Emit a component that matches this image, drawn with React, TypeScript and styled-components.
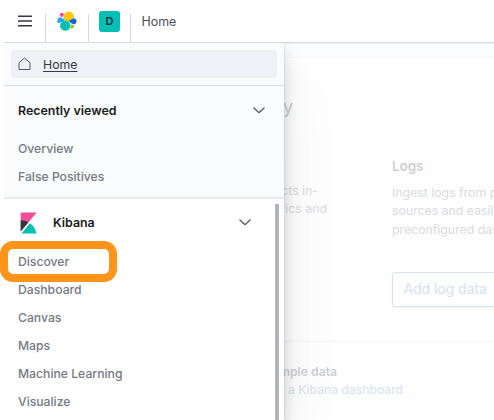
import React from "react";
import styled, { createGlobalStyle } from "styled-components";

const GlobalStyle = createGlobalStyle`
  * { box-sizing: border-box; }
  body { margin: 0; background: #fff; font-family: Inter, "Open Sans", sans-serif; }
`;

const Page = styled.div`
  position: relative;
  width: 494px;
  height: 420px;
  overflow: hidden;
  background: #fff;
  display: flex;
  flex-direction: column;
`;

const Header = styled.header`
  height: 43px;
  flex: none;
  margin-left: 4px;
  border-bottom: 1px solid #d3dae6;
  display: flex;
  align-items: stretch;
`;

const HeaderCell = styled.div<{ $width: number }>`
  width: ${(p) => p.$width}px;
  display: flex;
  align-items: center;
  justify-content: center;
  margin-top: 14px;
  border-right: 1px solid #d3dae6;
  svg, span { margin-top: -14px; }
`;

const SpaceBadge = styled.span`
  width: 21px;
  height: 21px;
  border-radius: 3px;
  background: #00bfb3;
  color: #10333a;
  font-size: 11px;
  font-weight: 600;
  line-height: 21px;
  text-align: center;
`;

const Breadcrumb = styled.div`
  padding: 1px 0 0 10.5px;
  font-size: 12.4px;
  line-height: 41px;
  color: #4b4e57;
`;

const Body = styled.div`
  flex: 1;
  position: relative;
  display: flex;
  padding-left: 4px;
`;

const Main = styled.main`
  flex: 1;
  min-width: 0;
  padding-left: 280px;
  border-top: 1px solid #eceff4;
  background: #fefefe;
  overflow: hidden;
`;

const MainTop = styled.div`
  height: 14px;
  background: #fcfdfe;
  border-bottom: 1px solid #f8f9fa;
`;

const Columns = styled.div`
  display: flex;
  height: 284px;
  border-bottom: 1px solid #f4f5f7;
`;

const Column = styled.section<{ $width?: number }>`
  width: ${(p) => p.$width ?? 102}px;
  flex: none;
  display: flex;
  flex-direction: column;
  white-space: nowrap;
`;

const ClippedLine = styled.div<{ $width: number }>`
  width: ${(p) => p.$width}px;
  display: flex;
  justify-content: flex-end;
  white-space: nowrap;
`;

const Solution = styled(ClippedLine)`
  margin-top: 35px;
  height: 28px;
  font-size: 18px;
  line-height: 28px;
  color: #c9cacd;
`;

const Copy = styled.div`
  font-size: 12.3px;
  line-height: 18.4px;
  color: #dadbde;
`;

const LeftCopy = styled(Copy)`
  margin-top: 61px;
`;

const CardTitle = styled.h3`
  margin: 98px 0 8px;
  font-size: 13.4px;
  font-weight: 600;
  line-height: 20px;
  color: #cecfd2;
`;

const AddButton = styled.button`
  margin-top: 33px;
  width: 130px;
  height: 35px;
  padding: 0 0 1px 10.5px;
  border: 1px solid #d3e3f1;
  border-radius: 3px;
  background: #fefefe;
  box-shadow: 0 1px 2px rgba(150, 180, 210, 0.1);
  color: #d4e3f1;
  font: 13.9px Inter, sans-serif;
  text-align: left;
`;

const Sample = styled.section`
  padding-top: 21px;
  font-size: 12.2px;
  line-height: 18.4px;
`;

const SampleTitle = styled(ClippedLine)`
  font-weight: 600;
  color: #cecfd2;
`;

const SampleLink = styled(ClippedLine)`
  color: #d4e3f1;
`;

const Nav = styled.nav`
  position: absolute;
  left: 4px;
  top: 0;
  bottom: 0;
  width: 280px;
  background: #fff;
  box-shadow: 0 40px 64px rgba(65, 78, 101, 0.05), 0 12px 24px rgba(30, 35, 45, 0.13),
    0 6px 12px rgba(30, 35, 45, 0.08), 0 1px 2px rgba(30, 35, 45, 0.2);
  clip-path: inset(0 -80px 0 0);
`;

const NavTop = styled.div`
  height: 43px;
  padding: 7px;
  background: #fafbfd;
  border-bottom: 1px solid #d9dfe9;
`;

const HomeLink = styled.a`
  height: 28px;
  border-radius: 3px;
  background: #eef2f7;
  display: flex;
  align-items: center;
  padding-left: 7px;
  gap: 12px;
  font-size: 12.3px;
  color: #343741;
  text-decoration: underline;
  text-underline-offset: 2px;
`;

const Recent = styled.section`
  height: 113px;
  padding-top: 9px;
  background: #fafbfd;
  border-bottom: 2px solid #e6eaf1;
`;

const Group = styled.section`
  position: relative;
  padding-top: 9px;
`;

const GroupHeader = styled.div<{ $right: number; $lift?: number }>`
  height: 30px;
  display: flex;
  align-items: center;
  padding: 0 ${(p) => p.$right}px ${(p) => p.$lift ?? 0}px 14px;
  color: #1a1c21;
  font-size: 12.4px;
  font-weight: 600;
  > svg:last-child { margin-left: auto; }
`;

const Logo = styled.span`
  display: flex;
  margin: 1px 16px 0 2px;
`;

const Links = styled.ul<{ $gap: number }>`
  list-style: none;
  margin: ${(p) => p.$gap}px 0 0;
  padding: 0 0 0 14px;
`;

const LinkItem = styled.li`
  height: 28px;
  line-height: 28px;
  font-size: 12.2px;
  font-weight: 500;
  color: #747984;
`;

const Scrollbar = styled.div`
  position: absolute;
  top: 5px;
  left: 271px;
  width: 3.5px;
  height: 230px;
  background: #b1b4bd;
`;

const Highlight = styled.div`
  position: absolute;
  left: 0;
  top: 241px;
  width: 117px;
  height: 41px;
  border: 8px solid #ff941a;
  border-radius: 13px;
`;

const MenuIcon = () => (
  <svg width="14" height="12" viewBox="0 0 14 12" stroke="#343741" strokeWidth="1.5">
    <path d="M0 1.2h14M0 6h14M0 10.8h14" />
  </svg>
);

const ElasticLogo = () => (
  <svg width="20" height="20" viewBox="0 0 20 20">
    <circle cx="11.7" cy="5.8" r="5.3" fill="#fec514" />
    <circle cx="8.2" cy="14.7" r="5.1" fill="#00bfb3" />
    <circle cx="4.8" cy="3.8" r="2.1" fill="#f04e98" />
    <path d="M3.1 6.3 7.7 8.4 6 10.5 1 12.3C-.3 10 .3 7 3.1 6.3Z" fill="#1ba9f5" />
    <path d="m17 7.2-5 2.3 1.6 2.6 3.8 1.5c2.9-1.5 3-5.3-.4-6.4Z" fill="#0b64dd" />
    <path d="m13.6 13.2 3.5 1.3c.5 1.9-1.1 3.4-3.6 2.8Z" fill="#93c90e" />
  </svg>
);

const HomeIcon = () => (
  <svg width="13" height="14" viewBox="0 0 13 14" fill="none" stroke="#535966" strokeLinejoin="round">
    <path d="M1 12.5V5.7L6.5 1 12 5.7v6.8Z" />
  </svg>
);

const Chevron = () => (
  <svg width="12" height="7" viewBox="0 0 12 7" fill="none" stroke="#4d515c" strokeWidth="1.2" strokeLinecap="round">
    <path d="m.9 1 5.1 4.6L11.1 1" />
  </svg>
);

const KibanaLogo = () => (
  <svg width="17" height="22" viewBox="0 0 17 22">
    <path d="M.7.5h16L.7 19.5Z" fill="#f04e98" />
    <path d="M.7 8.3c2.9 0 5.6.7 7.7 2L.7 19.5Z" fill="#343741" />
    <path d="M9.9 11.2c3.5 2.2 5.9 6 6.6 10.3H1.5Z" fill="#00bfb3" />
  </svg>
);

const recentLinks = ["Overview", "False Positives"];
const kibanaLinks = ["Discover", "Dashboard", "Canvas", "Maps", "Machine Learning", "Visualize"];

export default function App() {
  return (
    <>
      <GlobalStyle />
      <Page>
        <Header>
          <HeaderCell $width={42}><MenuIcon /></HeaderCell>
          <HeaderCell $width={43}><ElasticLogo /></HeaderCell>
          <HeaderCell $width={42}><SpaceBadge>D</SpaceBadge></HeaderCell>
          <Breadcrumb>Home</Breadcrumb>
        </Header>
        <Body>
          <Main>
            <MainTop />
            <Columns>
              <Column $width={108}>
                <Solution $width={9}>y</Solution>
                <LeftCopy>
                  <ClippedLine $width={34}>cts in-</ClippedLine>
                  <ClippedLine $width={43}>rics and</ClippedLine>
                </LeftCopy>
              </Column>
              <Column>
                <CardTitle>Logs</CardTitle>
                <Copy>Ingest logs from p<br />sources and easily<br />preconfigured das</Copy>
                <AddButton>Add log data</AddButton>
              </Column>
            </Columns>
            <Sample>
              <SampleTitle $width={53}>mple data</SampleTitle>
              <SampleLink $width={119}>d a Kibana dashboard</SampleLink>
            </Sample>
          </Main>
          <Nav>
            <NavTop><HomeLink><HomeIcon />Home</HomeLink></NavTop>
            <Recent>
              <GroupHeader $right={19}>Recently viewed<Chevron /></GroupHeader>
              <Links $gap={10}>{recentLinks.map((t) => <LinkItem key={t}>{t}</LinkItem>)}</Links>
            </Recent>
            <Group>
              <GroupHeader $right={33} $lift={1}><Logo><KibanaLogo /></Logo>Kibana<Chevron /></GroupHeader>
              <Links $gap={10}>{kibanaLinks.map((t) => <LinkItem key={t}>{t}</LinkItem>)}</Links>
              <Scrollbar />
            </Group>
          </Nav>
        </Body>
        <Highlight />
      </Page>
    </>
  );
}
